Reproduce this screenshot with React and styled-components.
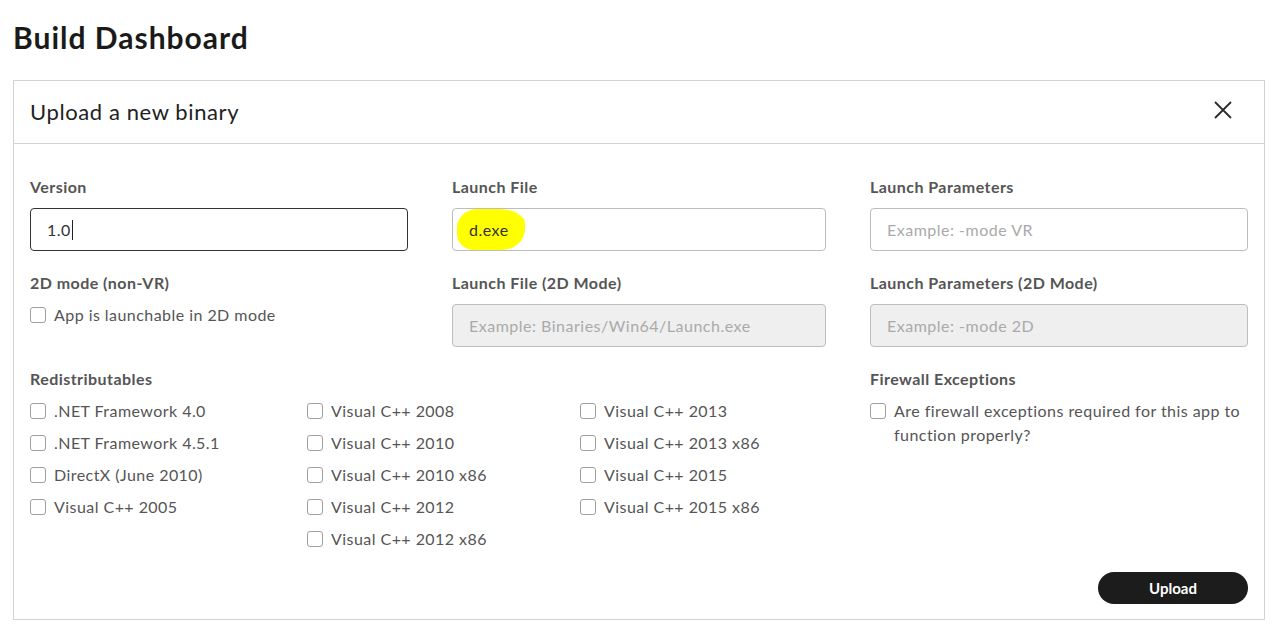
import React from "react";
import styled, { createGlobalStyle } from "styled-components";

const Global = createGlobalStyle`
  * { box-sizing: border-box; }
  html, body { margin: 0; padding: 0; background: #fff; }
  body { font-family: Lato, "Noto Sans", sans-serif; color: #333; }
`;

const Page = styled.div`
  padding: 0 15px 0 13px;
`;

const Title = styled.h1`
  margin: 0;
  padding: 19px 0 25px;
  font-size: 30px;
  line-height: 36px;
  font-weight: 700;
  letter-spacing: 1px;
  color: #1a1a1a;
`;

const Card = styled.section`
  border: 1px solid #d2d2d2;
`;

const Header = styled.header`
  height: 63px;
  display: flex;
  align-items: center;
  justify-content: space-between;
  padding: 0 32px 0 16px;
  border-bottom: 1px solid #d2d2d2;
`;

const HeaderTitle = styled.h2`
  margin: 0 0 2px;
  font-size: 22px;
  font-weight: 400;
  letter-spacing: 0.6px;
  color: #222;
`;

const CloseButton = styled.button`
  border: 0;
  background: none;
  padding: 0;
  width: 18px;
  height: 18px;
  margin-bottom: 4px;
  display: flex;
  cursor: pointer;
`;

const Body = styled.div`
  padding: 33px 16px 15px 16px;
`;

const Grid = styled.div`
  display: grid;
  grid-template-columns: 378px 374px 1fr;
  column-gap: 44px;
  row-gap: 22px;
`;

const Field = styled.div`
  display: flex;
  flex-direction: column;
  grid-column: ${(p) => p.$span || "auto"};
`;

const Label = styled.div`
  font-size: 16px;
  line-height: 20px;
  font-weight: 700;
  letter-spacing: 0.45px;
  color: #555;
  margin-bottom: ${(p) => (p.$tight ? "10px" : "11px")};
`;

const Input = styled.div`
  height: 43px;
  border-radius: 4px;
  border: 1px solid ${(p) => (p.$focused ? "#333" : "#bdbdbd")};
  background: ${(p) => (p.$disabled ? "#efefef" : "#fff")};
  color: ${(p) => (p.$placeholder ? "#aaa" : "#333")};
  font-size: 16px;
  letter-spacing: 0.5px;
  display: flex;
  align-items: center;
  padding: 0 16px;
  position: relative;
`;

const Caret = styled.span`
  display: inline-block;
  width: 1px;
  height: 20px;
  background: #222;
  margin-left: 1px;
`;

const Marker = styled.span`
  position: relative;
  z-index: 0;
  &::before {
    content: "";
    position: absolute;
    z-index: -1;
    left: -12px;
    right: -16px;
    top: -11px;
    bottom: -11px;
    background: #ffff00;
    border-radius: 30% 40% 35% 25% / 45% 35% 50% 40%;
  }
`;

const CheckList = styled.div`
  display: flex;
  flex-direction: column;
  gap: 8px;
`;

const CheckColumns = styled.div`
  display: grid;
  grid-template-columns: 277px 273px 1fr;
`;

const CheckRow = styled.label`
  display: flex;
  align-items: flex-start;
  gap: 8px;
  font-size: 16px;
  line-height: 24px;
  letter-spacing: 0.45px;
  color: #555;
`;

const Box = styled.span`
  flex: none;
  width: 16px;
  height: 16px;
  margin-top: 4px;
  border: 1px solid #a0a0a0;
  border-radius: 3px;
  background: #fff;
`;

const Footer = styled.div`
  display: flex;
  justify-content: flex-end;
  margin-top: 21px;
`;

const UploadButton = styled.button`
  width: 150px;
  height: 32px;
  border: 0;
  border-radius: 16px;
  background: #1c1c1c;
  color: #fff;
  font-family: Lato, "Noto Sans", sans-serif;
  font-size: 15px;
  font-weight: 700;
  cursor: pointer;
`;

const Check = ({ children }) => (
  <CheckRow>
    <Box />
    <span>{children}</span>
  </CheckRow>
);

const redist = [
  [".NET Framework 4.0", ".NET Framework 4.5.1", "DirectX (June 2010)", "Visual C++ 2005"],
  ["Visual C++ 2008", "Visual C++ 2010", "Visual C++ 2010 x86", "Visual C++ 2012", "Visual C++ 2012 x86"],
  ["Visual C++ 2013", "Visual C++ 2013 x86", "Visual C++ 2015", "Visual C++ 2015 x86"],
];

export default function App() {
  return (
    <Page>
      <Global />
      <Title>Build Dashboard</Title>
      <Card>
        <Header>
          <HeaderTitle>Upload a new binary</HeaderTitle>
          <CloseButton aria-label="Close">
            <svg width="18" height="18" viewBox="0 0 18 18">
              <path d="M1 1L17 17M17 1L1 17" stroke="#2a2a2a" strokeWidth="1.8" />
            </svg>
          </CloseButton>
        </Header>
        <Body>
          <Grid>
            <Field>
              <Label>Version</Label>
              <Input $focused>
                1.0
                <Caret />
              </Input>
            </Field>
            <Field>
              <Label>Launch File</Label>
              <Input>
                <Marker>d.exe</Marker>
              </Input>
            </Field>
            <Field>
              <Label>Launch Parameters</Label>
              <Input $placeholder>Example: -mode VR</Input>
            </Field>

            <Field>
              <Label $tight>2D mode (non-VR)</Label>
              <Check>App is launchable in 2D mode</Check>
            </Field>
            <Field>
              <Label>Launch File (2D Mode)</Label>
              <Input $disabled $placeholder>
                Example: Binaries/Win64/Launch.exe
              </Input>
            </Field>
            <Field>
              <Label>Launch Parameters (2D Mode)</Label>
              <Input $disabled $placeholder>
                Example: -mode 2D
              </Input>
            </Field>

            <Field $span="span 2">
              <Label $tight>Redistributables</Label>
              <CheckColumns>
                {redist.map((col, i) => (
                  <CheckList key={i}>
                    {col.map((item) => (
                      <Check key={item}>{item}</Check>
                    ))}
                  </CheckList>
                ))}
              </CheckColumns>
            </Field>
            <Field>
              <Label $tight>Firewall Exceptions</Label>
              <Check>Are firewall exceptions required for this app to function properly?</Check>
            </Field>
          </Grid>
          <Footer>
            <UploadButton>Upload</UploadButton>
          </Footer>
        </Body>
      </Card>
    </Page>
  );
}
